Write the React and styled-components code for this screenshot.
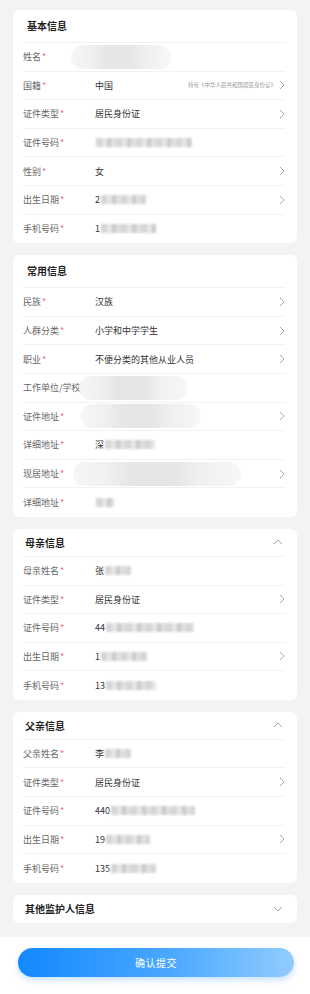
import React from "react";
import styled, { createGlobalStyle } from "styled-components";

const GlobalStyle = createGlobalStyle`
  html, body {
    margin: 0;
    padding: 0;
    background: #f2f3f5;
    font-family: "Noto Sans CJK SC", "Noto Sans", sans-serif;
  }
`;

const RightArrow = () => (
  <svg width="6" height="10" viewBox="0 0 6 10">
    <polyline points="1,1 5,5 1,9" fill="none" stroke="#a8a8a8" strokeWidth="1" />
  </svg>
);

const Fold = ({ open }) => (
  <svg width="10" height="6" viewBox="0 0 10 6">
    <polyline
      points={open ? "1,5 5,1 9,5" : "1,1 5,5 9,1"}
      fill="none"
      stroke="#a8a8a8"
      strokeWidth="1"
    />
  </svg>
);

const basic = [
  { label: "姓名", cloud: 100, cloudShift: -24 },
  { label: "国籍", value: "中国", hint: "持有《中华人民共和国居民身份证》", arrow: true },
  { label: "证件类型", value: "居民身份证", arrow: true },
  { label: "证件号码", blur: 96 },
  { label: "性别", value: "女", arrow: true },
  { label: "出生日期", value: "2", blur: 45, arrow: true },
  { label: "手机号码", value: "1", blur: 55 },
];

const common = [
  { label: "民族", value: "汉族", arrow: true },
  { label: "人群分类", value: "小学和中学学生", arrow: true },
  { label: "职业", value: "不便分类的其他从业人员", arrow: true },
  { label: "工作单位/学校", plain: true, cloud: 108, cloudShift: -16 },
  { label: "证件地址", cloud: 120, cloudShift: -14, arrow: true },
  { label: "详细地址", value: "深", blur: 50 },
  { label: "现居地址", cloud: 168, cloudShift: -22, arrow: true },
  { label: "详细地址", blur: 18 },
];

const mother = [
  { label: "母亲姓名", value: "张", blur: 26 },
  { label: "证件类型", value: "居民身份证", arrow: true },
  { label: "证件号码", value: "44", blur: 88 },
  { label: "出生日期", value: "1", blur: 46, arrow: true },
  { label: "手机号码", value: "13", blur: 50 },
];

const father = [
  { label: "父亲姓名", value: "李", blur: 26 },
  { label: "证件类型", value: "居民身份证", arrow: true },
  { label: "证件号码", value: "440", blur: 84 },
  { label: "出生日期", value: "19", blur: 44, arrow: true },
  { label: "手机号码", value: "135", blur: 45 },
];

const Row = ({ item }) => (
  <Line>
    <Label>
      {item.label}
      {!item.plain && <Star>*</Star>}
    </Label>
    <Value>
      {item.value}
      {item.blur && <Mosaic style={{ width: item.blur }} />}
      {item.cloud && (
        <Cloud style={{ width: item.cloud, marginLeft: item.cloudShift }} />
      )}
    </Value>
    {item.hint && <Hint>{item.hint}</Hint>}
    <ArrowSlot>{item.arrow && <RightArrow />}</ArrowSlot>
  </Line>
);

const Section = ({ title, rows, fold, big }) => (
  <Card>
    <Header $big={big}>
      <Title $big={big}>{title}</Title>
      {fold && <Fold open={fold === "open"} />}
    </Header>
    {rows.map((r, i) => (
      <Row key={i} item={r} />
    ))}
  </Card>
);

export default function App() {
  return (
    <Page>
      <GlobalStyle />
      <Content>
        <Section title="基本信息" rows={basic} big />
        <Section title="常用信息" rows={common} big />
        <Section title="母亲信息" rows={mother} fold="open" />
        <Section title="父亲信息" rows={father} fold="open" />
        <Collapsed>
          <Title>其他监护人信息</Title>
          <Fold />
        </Collapsed>
      </Content>
      <Footer>
        <Submit>确认提交</Submit>
      </Footer>
    </Page>
  );
}

const Page = styled.div`
  width: 310px;
  min-height: 994px;
  display: flex;
  flex-direction: column;
  background: #f2f3f5;
`;

const Content = styled.div`
  display: flex;
  flex-direction: column;
  gap: 12px;
  padding: 10px 13px 14px;
`;

const Card = styled.div`
  background: #fff;
  border-radius: 6px;
  padding: 0 12px 0 10px;
`;

const Header = styled.div`
  display: flex;
  align-items: center;
  justify-content: space-between;
  height: ${(p) => (p.$big ? "33px" : "28px")};
  padding: ${(p) => (p.$big ? "0 2px 0 4px" : "0 2px 0 2px")};
  border-bottom: 1px solid #f2f2f2;
  box-sizing: border-box;
`;

const Title = styled.div`
  font-size: 10px;
  font-weight: 700;
  color: #1f1f1f;
  margin-top: ${(p) => (p.$big ? "-1px" : "0")};
`;

const Line = styled.div`
  display: flex;
  align-items: center;
  height: 28.6px;
  box-sizing: border-box;
  border-bottom: 1px solid #f2f2f2;
  &:last-child {
    border-bottom: none;
  }
`;

const Label = styled.div`
  width: 72px;
  flex-shrink: 0;
  font-size: 9px;
  color: #666;
  white-space: nowrap;
`;

const Star = styled.span`
  color: #f56c6c;
  margin-left: 1px;
`;

const Value = styled.div`
  flex: 1;
  display: flex;
  align-items: center;
  font-size: 9px;
  color: #333;
  white-space: nowrap;
  min-width: 0;
`;

const Mosaic = styled.span`
  display: inline-block;
  height: 9px;
  margin-left: 1px;
  background: repeating-linear-gradient(
    90deg,
    #d2d2d2 0 6px,
    #e3e3e3 6px 11px,
    #c6c6c6 11px 15px,
    #dcdcdc 15px 20px
  );
  filter: blur(1.2px);
  opacity: 0.9;
`;

const Cloud = styled.span`
  display: inline-block;
  height: 24px;
  border-radius: 12px;
  background: linear-gradient(
    90deg,
    #f6f6f6 0%,
    #f0f0f0 20%,
    #e6e6e6 35%,
    #e6e6e6 60%,
    #f0f0f0 75%,
    #f7f7f7 100%
  );
  filter: blur(0.6px);
`;

const Hint = styled.div`
  font-size: 5.5px;
  color: #999;
  white-space: nowrap;
  margin-right: 1px;
`;

const ArrowSlot = styled.div`
  width: 8px;
  display: flex;
  justify-content: flex-end;
  align-items: center;
`;

const Collapsed = styled.div`
  background: #fff;
  border-radius: 6px;
  height: 28px;
  display: flex;
  align-items: center;
  justify-content: space-between;
  padding: 0 14px 0 12px;
`;

const Footer = styled.div`
  background: #fff;
  padding: 11px 16px 17px 18px;
  flex: 1;
`;

const Submit = styled.button`
  width: 100%;
  height: 29px;
  border: none;
  border-radius: 15px;
  background: linear-gradient(90deg, #1388ff 0%, #4aa8ff 55%, #92ccff 100%);
  box-shadow: 0 3px 6px rgba(30, 140, 255, 0.25);
  color: #fff;
  font-family: inherit;
  font-size: 10px;
  letter-spacing: 0.5px;
`;
